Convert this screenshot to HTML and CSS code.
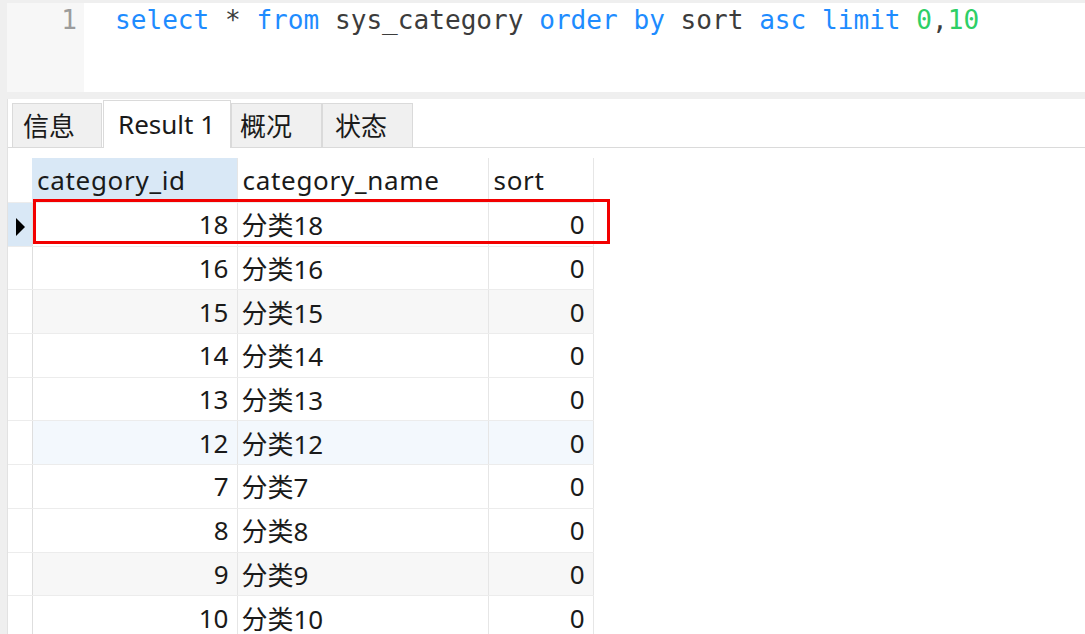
FILE: index.html
```html
<!DOCTYPE html>
<html>
  <head>
    <meta http-equiv="Content-Type" content="text/html;charset=utf-8" />
    <title>sys_category</title>
    <link rel="stylesheet" href="styles.css">
  </head>

  <body>
    <div class="window">
      <!-- Query editor -->
      <div class="editor">
        <div class="gutter">1</div>
        <div class="code"><span class="kw">select</span> * <span class="kw">from</span> sys_category <span class="kw">order by</span> sort <span class="kw">asc</span> <span class="kw">limit</span> <span class="num">0</span>,<span class="num">10</span></div>
      </div>

      <!-- Result panel -->
      <div class="results">
        <div class="tabs">
          <div class="tab tab-info">信息</div>
          <div class="tab active">Result 1</div>
          <div class="tab tab-overview">概况</div>
          <div class="tab tab-status">状态</div>
        </div>

        <div class="grid-wrap">
          <table class="grid">
            <colgroup>
              <col class="col-marker" />
              <col class="col-id" />
              <col class="col-name" />
              <col class="col-sort" />
            </colgroup>
            <thead>
              <tr>
                <th class="marker"></th>
                <th class="sorted">category_id</th>
                <th>category_name</th>
                <th>sort</th>
              </tr>
            </thead>
            <tbody>
              <tr class="current">
                <td class="marker"><span class="arrow"></span></td>
                <td class="num-cell">18</td>
                <td>分类18</td>
                <td class="num-cell">0</td>
              </tr>
              <tr>
                <td class="marker"></td>
                <td class="num-cell">16</td>
                <td>分类16</td>
                <td class="num-cell">0</td>
              </tr>
              <tr class="shade">
                <td class="marker"></td>
                <td class="num-cell">15</td>
                <td>分类15</td>
                <td class="num-cell">0</td>
              </tr>
              <tr>
                <td class="marker"></td>
                <td class="num-cell">14</td>
                <td>分类14</td>
                <td class="num-cell">0</td>
              </tr>
              <tr>
                <td class="marker"></td>
                <td class="num-cell">13</td>
                <td>分类13</td>
                <td class="num-cell">0</td>
              </tr>
              <tr class="tint">
                <td class="marker"></td>
                <td class="num-cell">12</td>
                <td>分类12</td>
                <td class="num-cell">0</td>
              </tr>
              <tr>
                <td class="marker"></td>
                <td class="num-cell">7</td>
                <td>分类7</td>
                <td class="num-cell">0</td>
              </tr>
              <tr>
                <td class="marker"></td>
                <td class="num-cell">8</td>
                <td>分类8</td>
                <td class="num-cell">0</td>
              </tr>
              <tr class="shade">
                <td class="marker"></td>
                <td class="num-cell">9</td>
                <td>分类9</td>
                <td class="num-cell">0</td>
              </tr>
              <tr>
                <td class="marker"></td>
                <td class="num-cell">10</td>
                <td>分类10</td>
                <td class="num-cell">0</td>
              </tr>
            </tbody>
          </table>

          <!-- red annotation box around the first row -->
          <div class="highlight"></div>
        </div>
      </div>
    </div>
  </body>
</html>
```

FILE: styles.css
```css
html,
body {
  height: 100%;
}

body {
  margin: 0;
  background-color: #efefef;
  overflow: hidden;
}

.window {
  display: flex;
  flex-direction: column;
  height: 100%;
  padding: 3px 0 0 7px;
  box-sizing: border-box;
}

/* editor */

.editor {
  display: flex;
  flex-shrink: 0;
  height: 89px;
  background-color: #ffffff;
  font-family: "DejaVu Sans Mono", "Liberation Mono", monospace;
  font-size: 26.1px;
  line-height: 34px;
}

.gutter {
  width: 77px;
  padding-right: 7px;
  box-sizing: border-box;
  text-align: right;
  color: #9c9c9c;
  background-color: #f7f7f7;
}

.code {
  padding-left: 31px;
  color: #3c3c3c;
  white-space: pre;
}

.kw {
  color: #1e8cff;
}

.num {
  color: #2ecf66;
}

/* result panel */

.results {
  flex: 1;
  min-height: 0;
  overflow: hidden;
  margin-top: 7px;
  background-color: #ffffff;
  border-left: 1px solid #e2e2e2;
  font-family: "Noto Sans", "Noto Sans CJK SC", sans-serif;
  font-size: 26px;
  color: #1a1a1a;
}

.tabs {
  display: flex;
  align-items: flex-end;
  height: 48px;
  padding-left: 4px;
  border-bottom: 1px solid #dadada;
}

.tab {
  height: 44px;
  line-height: 44px;
  padding-left: 10px;
  margin-right: 1px;
  box-sizing: border-box;
  background-color: #f0f0f0;
  border: 1px solid #dadada;
  border-bottom: none;
}

.tab-info {
  width: 90px;
}

.tab-overview {
  width: 91px;
  padding-left: 8px;
  margin-right: 0;
}

.tab-status {
  width: 91px;
  padding-left: 12px;
}

.tab.active {
  width: 128px;
  height: 48px;
  line-height: 46px;
  padding-left: 14px;
  margin-right: 0;
  margin-bottom: -1px;
  background-color: #ffffff;
}

/* data grid */

.grid-wrap {
  position: relative;
  margin-top: 10px;
}

.grid {
  border-collapse: collapse;
  table-layout: fixed;
  width: 585px;
}

.col-marker {
  width: 24px;
}

.col-id {
  width: 205px;
}

.col-name {
  width: 251px;
}

.col-sort {
  width: 105px;
}

.grid th,
.grid td {
  padding: 0 4px;
  white-space: nowrap;
  overflow: hidden;
  font-weight: normal;
  text-align: left;
  border-right: 1px solid #e6e6e6;
  border-bottom: 1px solid #ececec;
}

.grid th {
  height: 44px;
  padding-left: 5px;
  letter-spacing: 0.7px;
}

.grid td {
  height: 42.7px;
}

.grid th.sorted {
  background-color: #d9e8f6;
}

.grid th.marker {
  border-right: none;
}

.grid td.marker {
  padding: 0;
  text-align: left;
  border-right: 1px solid #dedede;
}

.grid td.num-cell {
  text-align: right;
  padding-right: 8px;
}

.grid tr.shade td {
  background-color: #f7f7f7;
}

.grid tr.tint td {
  background-color: #f3f8fd;
}

.grid tr.shade td.marker,
.grid tr.tint td.marker {
  background-color: #ffffff;
}

.grid tr.current td.marker {
  background-color: #d9e8f6;
}

.arrow {
  display: inline-block;
  width: 0;
  height: 0;
  margin-left: 8px;
  vertical-align: middle;
  border-top: 9px solid transparent;
  border-bottom: 9px solid transparent;
  border-left: 9px solid #000000;
}

.highlight {
  position: absolute;
  left: 25px;
  top: 41px;
  width: 577px;
  height: 45px;
  box-sizing: border-box;
  border: 3px solid #f20000;
}
```
